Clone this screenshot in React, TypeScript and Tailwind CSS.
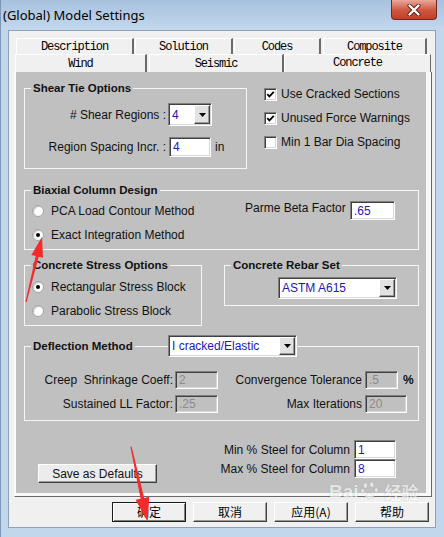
import React from "react";

const sunken =
  "border border-t-[#808080] border-l-[#808080] border-b-white border-r-white shadow-[inset_1px_1px_0_#404040,inset_-1px_-1px_0_#d8d8d8]";
const raised =
  "border border-t-white border-l-white border-b-[#404040] border-r-[#404040] shadow-[inset_-1px_-1px_0_#9a9a9a]";

function TextBox({ value, cls, disabled }: { value: string; cls: string; disabled?: boolean }) {
  return (
    <div
      className={`${cls} ${sunken} ${
        disabled ? "bg-[#c0c0c0] text-[#8c8c8c]" : "bg-white text-[#1a1ab0]"
      } flex items-center pl-[3px] text-[12px] leading-none shrink-0`}
    >
      {value}
    </div>
  );
}

function Select({ value, cls }: { value: string; cls: string }) {
  return (
    <div className={`${cls} ${sunken} bg-white flex items-stretch shrink-0`}>
      <div className="flex-1 flex items-center pl-[3px] text-[12px] text-[#1a1ab0] overflow-hidden whitespace-nowrap leading-none">
        {value}
      </div>
      <div className={`w-[16px] my-[1px] mr-[1px] bg-[#e2e2e2] ${raised} flex items-center justify-center`}>
        <svg width="7" height="4" viewBox="0 0 7 4">
          <polygon points="0,0 7,0 3.5,4" fill="#000" />
        </svg>
      </div>
    </div>
  );
}

function Check({ checked, label }: { checked?: boolean; label: string }) {
  return (
    <div className="h-[24px] flex items-center">
      <div className={`w-[13px] h-[13px] bg-white ${sunken} flex items-center justify-center shrink-0`}>
        {checked && (
          <svg width="9" height="9" viewBox="0 0 9 9">
            <path d="M1.3 4.2 L3.4 6.4 L7.8 1.9" stroke="#000" strokeWidth="1.8" fill="none" />
          </svg>
        )}
      </div>
      <span className="ml-[4px] text-[12px] text-[#111] whitespace-nowrap">{label}</span>
    </div>
  );
}

function Radio({ checked, label }: { checked?: boolean; label: string }) {
  return (
    <div className="h-[24px] flex items-center">
      <div className="w-[12px] h-[12px] rounded-full bg-white border border-[#a4a4a4] shadow-[inset_1px_1px_1px_rgba(0,0,0,0.25)] flex items-center justify-center shrink-0">
        {checked && <div className="w-[4px] h-[4px] rounded-full bg-black" />}
      </div>
      <span className="ml-[7px] text-[12px] text-[#111] whitespace-nowrap">{label}</span>
    </div>
  );
}

function Group({ title, cls, children }: { title: string; cls: string; children?: React.ReactNode }) {
  return (
    <fieldset className={`border border-[#f6f6f6] shrink-0 min-w-0 ${cls}`}>
      <legend className="ml-[6px] px-[2px] text-[11.5px] font-bold leading-[14px] text-[#111]">{title}</legend>
      {children}
    </fieldset>
  );
}

function Tab({ label, cls, selected }: { label: string; cls: string; selected?: boolean }) {
  return (
    <div
      className={`${cls} shrink-0 bg-[#f0f0f0] border-t border-l border-t-white border-l-white ${
        selected ? "border-r border-r-[#6a6a6a] pb-[2px]" : "border-r-2 border-r-[#6a6a6a]"
      } flex items-center justify-center font-['Liberation_Mono',monospace] text-[12px] tracking-[-1.1px] text-black leading-none`}
    >
      {label}
    </div>
  );
}

function Btn({ children, def }: { children: React.ReactNode; def?: boolean }) {
  return (
    <div
      className={`w-[74px] h-[20px] bg-[#f0f0f0] flex items-center justify-center font-['Noto_Sans_CJK_SC',sans-serif] text-[12px] text-black leading-none ${
        def
          ? "border border-[#1a1a1a] shadow-[inset_1px_1px_0_#fff,inset_-1px_-1px_0_#808080]"
          : raised
      }`}
    >
      {children}
    </div>
  );
}

export default function App() {
  return (
    <div className="relative w-[444px] h-[537px] overflow-hidden bg-[#c3d7ec] font-['Liberation_Sans',Arial,sans-serif] border-l border-l-[#7d97b6]">
      {/* Title bar */}
      <div className="h-[30px] flex items-start bg-gradient-to-b from-[#a7c1de] to-[#c4d8ed]">
        <span className="ml-[2px] mt-[7px] font-['Noto_Sans',sans-serif] text-[13px] leading-[16px] text-black whitespace-nowrap">
          (Global) Model Settings
        </span>
        <div className="ml-auto mr-[7px] w-[46px] h-[20px] rounded-b-[4px] border border-t-0 border-[#6e2a22] bg-gradient-to-b from-[#e8a899] via-[#cf5a44] to-[#c23d27] flex items-center justify-center">
          <svg width="14" height="12" viewBox="0 0 14 12">
            <path d="M2.5 1.5 L11.5 10.5 M11.5 1.5 L2.5 10.5" stroke="#5a1a12" strokeWidth="4" strokeLinecap="round" />
            <path d="M2.5 1.5 L11.5 10.5 M11.5 1.5 L2.5 10.5" stroke="#fff" strokeWidth="2.4" strokeLinecap="round" />
          </svg>
        </div>
      </div>

      {/* Client area */}
      <div className="ml-[7px] w-[428px] h-[498px] bg-[#f0f0f0] border border-[#8aa2bf] flex flex-col">
        {/* tabs row 1 */}
        <div className="flex ml-[7px] mt-[7px] h-[16px]">
          <Tab label="Description" cls="w-[118px]" />
          <Tab label="Solution" cls="ml-[1px] w-[98px]" />
          <Tab label="Codes" cls="ml-[1px] w-[87px]" />
          <Tab label="Composite" cls="ml-[2px] w-[104px]" />
        </div>
        {/* tabs row 2 */}
        <div className="flex ml-[6px] h-[18px]">
          <Tab label="Wind" cls="w-[132px]" />
          <Tab label="Seismic" cls="ml-[2px] w-[135px]" />
          <Tab label="Concrete" cls="w-[147px]" selected />
        </div>

        {/* tab page */}
        <div className="ml-[5px] w-[418px] h-[425px] border-l border-l-white border-r border-r-[#6a6a6a] border-b border-b-[#6a6a6a] pl-[1px] pr-[5px] pb-[3px] bg-[#f8f8f8]">
          <div className="w-[410px] h-[421px] bg-[#c0c0c0] flex flex-col">
            {/* Row 1 */}
            <div className="flex items-start">
              <Group title="Shear Tie Options" cls="ml-[8px] mt-[9px] w-[223px] h-[88px]">
                <div className="flex items-center mt-[8px]">
                  <span className="w-[141px] text-right text-[12px] text-[#111] whitespace-nowrap">
                    # Shear Regions :
                  </span>
                  <Select value="4" cls="ml-[2px] w-[44px] h-[23px]" />
                </div>
                <div className="flex items-center mt-[11px]">
                  <span className="w-[141px] text-right text-[12px] text-[#111] whitespace-nowrap">
                    Region Spacing Incr. :
                  </span>
                  <TextBox value="4" cls="ml-[3px] w-[42px] h-[20px]" />
                  <span className="ml-[4px] text-[12px] text-[#111]">in</span>
                </div>
              </Group>
              <div className="ml-[17px] mt-[10px] flex flex-col">
                <Check checked label="Use Cracked Sections" />
                <Check checked label="Unused Force Warnings" />
                <Check label="Min 1 Bar Dia Spacing" />
              </div>
            </div>

            {/* Row 2 */}
            <Group title="Biaxial Column Design" cls="ml-[8px] mt-[14px] w-[395px] h-[67px]">
              <div className="flex">
                <div className="w-[220px] pl-[7px] mt-[2px] flex flex-col">
                  <Radio label="PCA Load Contour Method" />
                  <Radio checked label="Exact Integration Method" />
                </div>
                <div className="flex items-start mt-[4px]">
                  <span className="w-[102px] text-[12px] leading-[14px] text-[#111] whitespace-nowrap">
                    Parme Beta Factor
                  </span>
                  <TextBox value=".65" cls="ml-[3px] w-[45px] h-[19px]" />
                </div>
              </div>
            </Group>

            {/* Row 3 */}
            <div className="flex items-start mt-[8px]">
              <Group title="Concrete Stress Options" cls="ml-[8px] w-[178px] h-[68px]">
                <div className="pl-[7px] mt-[3px] flex flex-col">
                  <Radio checked label="Rectangular Stress Block" />
                  <Radio label="Parabolic Stress Block" />
                </div>
              </Group>
              <Group title="Concrete Rebar Set" cls="ml-[22px] w-[195px] h-[48px]">
                <Select value="ASTM A615" cls="ml-[53px] mt-[5px] w-[119px] h-[22px]" />
              </Group>
            </div>

            {/* Row 4 */}
            <div className="relative ml-[8px] mt-[13px] w-[395px]">
              <Group title="Deflection Method" cls="w-[395px] h-[82px]">
                <div className="flex items-center mt-[18px] h-[18px]">
                  <span className="w-[148px] text-right text-[12px] text-[#111] whitespace-nowrap">
                    Creep&nbsp; Shrinkage Coeff:
                  </span>
                  <TextBox value="2" cls="ml-[2px] w-[43px] h-[18px]" disabled />
                  <span className="w-[144px] text-right text-[12px] text-[#111] whitespace-nowrap">
                    Convergence Tolerance
                  </span>
                  <TextBox value=".5" cls="ml-[3px] w-[33px] h-[18px]" disabled />
                  <span className="ml-[5px] text-[12px] font-bold text-[#111]">%</span>
                </div>
                <div className="flex items-center mt-[6px] h-[18px]">
                  <span className="w-[148px] text-right text-[12px] text-[#111] whitespace-nowrap">
                    Sustained LL Factor:
                  </span>
                  <TextBox value=".25" cls="ml-[2px] w-[43px] h-[18px]" disabled />
                  <span className="w-[144px] text-right text-[12px] text-[#111] whitespace-nowrap">
                    Max Iterations
                  </span>
                  <TextBox value="20" cls="ml-[3px] w-[42px] h-[18px]" disabled />
                </div>
              </Group>
              <div className="absolute left-[144px] top-[-4px]">
                <Select value="I cracked/Elastic" cls="w-[129px] h-[22px]" />
              </div>
            </div>

            {/* Row 5 */}
            <div className="flex items-start mt-[19px]">
              <div
                className={`ml-[22px] mt-[24px] w-[119px] h-[19px] bg-[#ececec] ${raised} flex items-center justify-center text-[12px] text-[#111] leading-none`}
              >
                Save as Defaults
              </div>
              <div className="ml-auto mr-[30px] flex flex-col">
                <div className="flex items-center justify-end">
                  <span className="text-[12px] text-[#111] whitespace-nowrap">Min % Steel for Column</span>
                  <TextBox value="1" cls="ml-[4px] w-[42px] h-[19px]" />
                </div>
                <div className="flex items-center justify-end">
                  <span className="text-[12px] text-[#111] whitespace-nowrap">Max % Steel for Column</span>
                  <TextBox value="8" cls="ml-[4px] w-[42px] h-[19px]" />
                </div>
              </div>
            </div>
          </div>
        </div>

        {/* dialog buttons */}
        <div className="flex ml-[103px] mt-[5px] gap-[7px]">
          <Btn def>确定</Btn>
          <Btn>取消</Btn>
          <Btn>应用(A)</Btn>
          <Btn>帮助</Btn>
        </div>
      </div>

      {/* watermark */}
      <div className="absolute left-[328px] top-[481px] pointer-events-none opacity-60 flex items-center text-white font-bold text-[19px] leading-none [text-shadow:0_0_1px_#888]">
        <span>Bai</span>
        <svg width="20" height="20" viewBox="0 0 22 22" className="mx-[1px]">
          <g fill="#fff" stroke="#999" strokeWidth="0.5">
            <ellipse cx="6" cy="5" rx="2.3" ry="3" />
            <ellipse cx="13" cy="4" rx="2.3" ry="3" />
            <ellipse cx="3" cy="11" rx="2" ry="2.6" />
            <ellipse cx="18" cy="10" rx="2" ry="2.6" />
            <path d="M5 18 Q10 8 16 18 Q10 21 5 18 Z" />
          </g>
        </svg>
        <span className="font-['Noto_Sans_CJK_SC',sans-serif] text-[17px] ml-[4px]">经验</span>
      </div>

      {/* red annotation arrows */}
      <svg className="absolute left-0 top-0 pointer-events-none" width="444" height="537" viewBox="0 0 444 537">
        <polygon
          points="24.4,301.9 34.7,256.0 30.4,255.0 41,237 42.0,257.8 37.7,256.8 25.6,302.1"
          fill="#f42a2c"
        />
        <polygon
          points="129.4,446.8 139.6,498.7 134.6,499.8 146.7,521.7 148.2,496.8 143.2,497.9 130.6,446.6"
          fill="#f42a2c"
        />
      </svg>
    </div>
  );
}
